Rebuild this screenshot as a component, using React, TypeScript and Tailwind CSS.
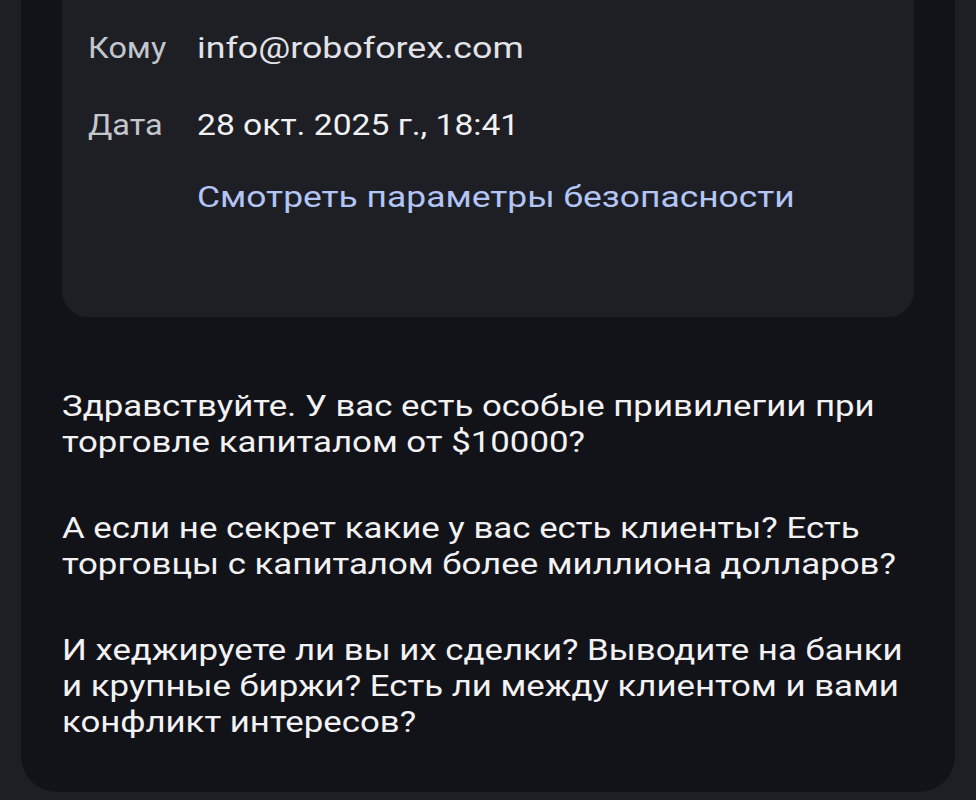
export default function App() {
  return (
    <div className="h-[800px] w-[976px] overflow-hidden bg-[#1e1f24] font-['Roboto',sans-serif]">
      <div className="ml-[21px] h-[792px] w-[934px] rounded-b-[36px] bg-[#121318]">
        {/* header panel */}
        <div className="mx-[41px] h-[317px] rounded-b-[26px] bg-[#1e1f24] pl-[26px] pt-[30px]">
          <div className="flex h-[36px] items-center text-[30px] leading-[36px]">
            <span className="inline-block w-[109px]">
              <span className="inline-block origin-left scale-x-[1.08] text-[#c4c6cd]">Кому</span>
            </span>
            <span className="inline-block origin-left scale-x-[1.19] text-[#e2e3e8]">info@roboforex.com</span>
          </div>
          <div className="mt-[41px] flex h-[36px] items-center text-[30px] leading-[36px]">
            <span className="inline-block w-[109px]">
              <span className="inline-block origin-left scale-x-[1.08] text-[#c4c6cd]">Дата</span>
            </span>
            <span className="inline-block origin-left scale-x-[1.12] text-[#f1f1f4]">28 окт. 2025 г., 18:41</span>
          </div>
          <div className="mt-[36px] pl-[109px] text-[30px] leading-[36px]">
            <span className="inline-block origin-left scale-x-[1.18] text-[#b3c5f5]">
              Смотреть параметры безопасности
            </span>
          </div>
        </div>

        {/* message body */}
        <div className="px-[41px] pt-[71px]">
          <div className="origin-left scale-x-[1.16] text-[30px] leading-[36.4px] text-[#f2f2f4]">
            <p>
              Здравствуйте. У вас есть особые привилегии при
              <br />
              торговле капиталом от $10000?
            </p>
            <p className="mt-[49px]">
              А если не секрет какие у вас есть клиенты? Есть
              <br />
              торговцы с капиталом более миллиона долларов?
            </p>
            <p className="mt-[49px]">
              И хеджируете ли вы их сделки? Выводите на банки
              <br />
              и крупные биржи? Есть ли между клиентом и вами
              <br />
              конфликт интересов?
            </p>
          </div>
        </div>
      </div>
    </div>
  );
}
